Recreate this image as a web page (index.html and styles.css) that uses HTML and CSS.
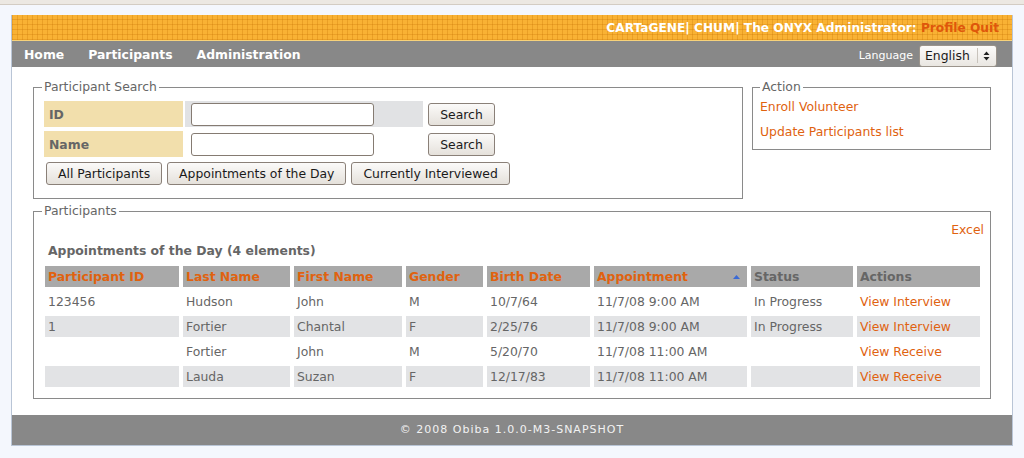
FILE: index.html
```html
<!DOCTYPE html>
<html lang="en">
<head>
<meta charset="utf-8">
<title>Onyx - Participants</title>
<link rel="stylesheet" href="styles.css">
</head>
<body>
<div class="topbar"></div>
<div class="page">
  <header class="brand">
    <span class="brand-text">CARTaGENE| CHUM| The ONYX Administrator: <a class="brand-link" href="#">Profile</a> <a class="brand-link" href="#">Quit</a></span>
  </header>
  <nav class="nav">
    <div class="menu">
      <a href="#">Home</a>
      <a href="#">Participants</a>
      <a href="#">Administration</a>
    </div>
    <div class="lang">
      <span class="lang-label">Language</span>
      <div class="lang-select">
        <span class="lang-value">English</span>
        <span class="lang-sep"></span>
        <svg class="lang-arrows" width="7" height="12" viewBox="0 0 7 12"><path d="M0.5 5 L3.5 1.5 L6.5 5 Z M0.5 7 L3.5 10.5 L6.5 7 Z" fill="#222"/></svg>
      </div>
    </div>
  </nav>
  <main class="content">
    <div class="top-row">
      <fieldset class="box search">
        <legend class="legend-search">Participant Search</legend>
        <div class="search-grid">
          <div class="label">ID</div>
          <div class="field shade"><input class="text-input" type="text"></div>
          <div class="action-cell"><button class="btn btn-search" type="button">Search</button></div>
          <div class="label">Name</div>
          <div class="field"><input class="text-input" type="text"></div>
          <div class="action-cell"><button class="btn btn-search" type="button">Search</button></div>
        </div>
        <div class="btn-row">
          <button class="btn" type="button">All Participants</button>
          <button class="btn" type="button">Appointments of the Day</button>
          <button class="btn" type="button">Currently Interviewed</button>
        </div>
      </fieldset>
      <fieldset class="box actions">
        <legend>Action</legend>
        <a class="action-link" href="#">Enroll Volunteer</a>
        <a class="action-link" href="#">Update Participants list</a>
      </fieldset>
    </div>
    <fieldset class="box participants">
      <legend class="legend-participants">Participants</legend>
      <div class="export"><a href="#" class="link">Excel</a></div>
      <div class="caption">Appointments of the Day (4 elements)</div>
      <table class="grid">
        <colgroup>
          <col class="c1"><col class="c2"><col class="c3"><col class="c4">
          <col class="c5"><col class="c6"><col class="c7"><col class="c8">
        </colgroup>
        <thead>
          <tr>
            <th>Participant ID</th>
            <th>Last Name</th>
            <th>First Name</th>
            <th>Gender</th>
            <th>Birth Date</th>
            <th class="sorted">Appointment<svg class="sort-icon" width="7" height="4" viewBox="0 0 7 4"><path d="M0 4 L3.5 0 L7 4 Z" fill="#3a6ad6"/></svg></th>
            <th class="plain">Status</th>
            <th class="plain">Actions</th>
          </tr>
        </thead>
        <tbody>
          <tr>
            <td>123456</td><td>Hudson</td><td>John</td><td>M</td><td>10/7/64</td><td>11/7/08 9:00 AM</td><td>In Progress</td><td><a href="#" class="link">View Interview</a></td>
          </tr>
          <tr class="alt">
            <td>1</td><td>Fortier</td><td>Chantal</td><td>F</td><td>2/25/76</td><td>11/7/08 9:00 AM</td><td>In Progress</td><td><a href="#" class="link">View Interview</a></td>
          </tr>
          <tr>
            <td></td><td>Fortier</td><td>John</td><td>M</td><td>5/20/70</td><td>11/7/08 11:00 AM</td><td></td><td><a href="#" class="link">View Receive</a></td>
          </tr>
          <tr class="alt">
            <td></td><td>Lauda</td><td>Suzan</td><td>F</td><td>12/17/83</td><td>11/7/08 11:00 AM</td><td></td><td><a href="#" class="link">View Receive</a></td>
          </tr>
        </tbody>
      </table>
    </fieldset>
  </main>
  <footer class="footer">© 2008 Obiba 1.0.0-M3-SNAPSHOT</footer>
</div>
</body>
</html>
```

FILE: styles.css
```css
* { box-sizing: border-box; }

body {
  margin: 0;
  background: #f4f7fd;
  font-family: "DejaVu Sans", "Liberation Sans", sans-serif;
  font-size: 12.4px;
  color: #666;
}

a { text-decoration: none; }

.topbar {
  height: 4px;
  background: #ece8e2;
  border-bottom: 1px solid #d3ccc3;
  box-sizing: content-box;
}

.page {
  margin: 10px 11px 0;
  border: 1px solid #b9c5d6;
  border-top: none;
  background: #fff;
}

/* header */
.brand {
  height: 26px;
  border-bottom: 1px solid #f7d27a;
  background-color: #f9b234;
  background-image:
    repeating-linear-gradient(90deg, rgba(196, 112, 0, 0.28) 0 1px, transparent 1px 5px),
    repeating-linear-gradient(0deg, rgba(196, 112, 0, 0.28) 0 1px, transparent 1px 5px);
  display: flex;
  justify-content: flex-end;
  align-items: center;
  padding-right: 13px;
  font-size: 12.2px;
  font-weight: bold;
  color: #fff;
}

.brand-link { color: #df570b; }

/* navigation */
.nav {
  height: 26px;
  background: #888;
  display: flex;
  justify-content: space-between;
  align-items: center;
  padding: 0 15px 0 12px;
}

.menu { display: flex; gap: 24px; }

.menu a { color: #fff; font-weight: bold; font-size: 12.4px; }

.lang { display: flex; align-items: center; gap: 6px; margin-top: 3px; }

.lang-label { color: #fff; font-size: 11px; }

.lang-select {
  width: 78px;
  height: 22px;
  border: 1px solid #9b948c;
  border-radius: 3px;
  background: linear-gradient(#fcfbfa, #e9e6e1);
  display: flex;
  align-items: center;
  padding-left: 5px;
  color: #1a1a1a;
  font-size: 12.4px;
}

.lang-value { flex: 1; }

.lang-sep { width: 1px; height: 15px; background: #c8c3bc; margin-right: 5px; }

.lang-arrows { margin-right: 6px; }

/* content */
.content { padding: 13px 21px 16px; }

.top-row { display: flex; gap: 9px; align-items: flex-start; }

.box { margin: 0; border: 1px solid #8a8a8a; min-width: 0; }

.box legend { padding: 0 2px; line-height: 14px; color: #666; font-size: 12.4px; }

.search { width: 710px; padding: 7px 10px 13px; }

.legend-search { margin-left: -2px; }

.search-grid {
  display: grid;
  grid-template-columns: 139px 238px auto;
  grid-auto-rows: 26px;
  column-gap: 2px;
  row-gap: 4px;
}

.label { background: #f2dfac; font-weight: bold; padding-left: 5px; display: flex; align-items: center; }

.field { padding-left: 6px; display: flex; align-items: center; }

.field.shade { background: #e1e2e4; }

.text-input { width: 183px; height: 23px; border: 1px solid #857b72; border-radius: 3px; background: #fff; margin: 0; }

.action-cell { display: flex; align-items: center; padding-left: 3px; }

.btn {
  height: 23px;
  border: 1px solid #8a8078;
  border-radius: 3px;
  background: linear-gradient(#fbfaf9, #e5e1db);
  font-family: "DejaVu Sans", "Liberation Sans", sans-serif;
  font-size: 12.4px;
  color: #1a1a1a;
  padding: 0 11px;
  margin: 0;
}

.btn-search { width: 67px; padding: 0; }

.btn-row { display: flex; gap: 5px; margin: 5px 0 0 2px; }

.actions { flex: 1; padding: 0 7px 5px; }

.action-link { display: block; line-height: 25px; color: #e0620f; }

.participants { margin-top: 5px; padding: 5px 5px 7px 7px; }

.legend-participants { margin-left: 1px; }

.export { text-align: right; line-height: 14px; padding-right: 1px; }

.link { color: #e0620f; }

.caption { margin: 7px 0 0 7px; line-height: 14px; font-weight: bold; }

/* table */
.grid { margin-top: 4px; width: 943px; table-layout: fixed; border-collapse: separate; border-spacing: 4px; }

.c1 { width: 134px; }
.c2 { width: 107px; }
.c3 { width: 108px; }
.c4 { width: 77px; }
.c5 { width: 103px; }
.c6 { width: 153px; }
.c7 { width: 102px; }
.c8 { width: 123px; }

.grid th, .grid td { height: 21px; padding: 0 3px; text-align: left; white-space: nowrap; overflow: hidden; }

.grid th { background: #a9a9a9; color: #e0620f; font-weight: bold; }

.grid th.plain { color: #666; }

.sort-icon { float: right; margin: 6px 4px 0 0; }

.grid tr.alt td { background: #e2e3e5; }

/* footer */
.footer { height: 30px; line-height: 30px; background: #888; color: #f2f2f2; text-align: center; font-size: 11px; letter-spacing: 1px; }
```
